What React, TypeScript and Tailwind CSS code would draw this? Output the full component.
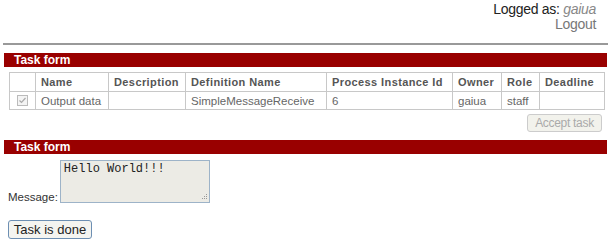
import React from "react";

const th = "border border-[#c8c8c8] px-[5px] text-left font-bold text-[11px] text-[#555] h-[19px] p-0 whitespace-nowrap overflow-hidden tracking-[0.4px] leading-[17px]";
const td = "border border-[#c8c8c8] px-[5px] text-[11.5px] text-[#666] h-[18px] p-0 whitespace-nowrap overflow-hidden leading-[16px]";

export default function App() {
  return (
    <div className="w-[611px] h-[241px] bg-white relative overflow-hidden" style={{ fontFamily: "'Liberation Sans', Arial, sans-serif" }}>
      <div className="flex flex-col items-end pr-[15px] pt-[2px] text-[14px] leading-[15px] tracking-[-0.3px]">
        <div className="text-[#222]">Logged as: <span className="italic text-[#888]">gaiua</span></div>
        <div className="text-[#777]">Logout</div>
      </div>
      <div className="mx-[3px] mt-[11px] h-[2px] bg-[#999]" />
      <div className="mx-[4px] mt-[8px] h-[14px] bg-[#990000] text-white font-bold text-[12px] leading-[14px] pl-[10px]">Task form</div>
      <div className="pl-[9px] pr-[7px] mt-[5px]">
        <table className="w-[595px] border-collapse table-fixed">
          <colgroup>
            <col className="w-[26px]" />
            <col className="w-[73px]" />
            <col className="w-[77px]" />
            <col className="w-[141px]" />
            <col className="w-[126px]" />
            <col className="w-[49px]" />
            <col className="w-[38px]" />
            <col className="w-[65px]" />
          </colgroup>
          <thead>
            <tr>
              <th className={th}></th>
              <th className={th}>Name</th>
              <th className={th}>Description</th>
              <th className={th}>Definition Name</th>
              <th className={th}>Process Instance Id</th>
              <th className={th}>Owner</th>
              <th className={th}>Role</th>
              <th className={th}>Deadline</th>
            </tr>
          </thead>
          <tbody>
            <tr>
              <td className={td}>
                <div className="w-[11px] h-[11px] border border-[#bbb] bg-[#f4f4f4] flex items-center justify-center mx-auto">
                  <svg width="9" height="9" viewBox="0 0 9 9"><path d="M1.5 4.5 L3.5 6.5 L7.5 2" stroke="#aaa" strokeWidth="1.2" fill="none" /></svg>
                </div>
              </td>
              <td className={td}>Output data</td>
              <td className={td}></td>
              <td className={td}>SimpleMessageReceive</td>
              <td className={td}>6</td>
              <td className={td}>gaiua</td>
              <td className={td}>staff</td>
              <td className={td}></td>
            </tr>
          </tbody>
        </table>
      </div>
      <div className="flex justify-end pr-[9px] mt-[4px]">
        <button className="w-[75px] h-[18px] border border-[#ccc] rounded-[3px] bg-[#f2f2ec] text-[#aaa] text-[12px] leading-[16px] tracking-[-0.3px]">Accept task</button>
      </div>
      <div className="mx-[4px] mt-[8px] h-[14px] bg-[#990000] text-white font-bold text-[12px] leading-[14px] pl-[10px]">Task form</div>
      <div className="flex items-end pl-[8px] mt-[6px]">
        <span className="text-[11.5px] text-[#333] mr-[2px] leading-[12px]">Message:</span>
        <div className="w-[150px] h-[43px] border border-[#9db3c8] bg-[#ecebe5] relative">
          <div className="text-[12px] text-[#222] pl-[3px] pt-[1px] leading-[14px]" style={{ fontFamily: "'Liberation Mono', 'Courier New', monospace" }}>Hello World!!!</div>
          <svg className="absolute right-[1px] bottom-[1px]" width="8" height="8" viewBox="0 0 8 8">
            <rect x="6" y="1" width="1" height="1" fill="#999" />
            <rect x="4" y="3" width="1" height="1" fill="#999" />
            <rect x="6" y="3" width="1" height="1" fill="#999" />
            <rect x="2" y="5" width="1" height="1" fill="#999" />
            <rect x="4" y="5" width="1" height="1" fill="#999" />
            <rect x="6" y="5" width="1" height="1" fill="#999" />
          </svg>
        </div>
      </div>
      <div className="pl-[8px] mt-[17px] flex">
        <button className="w-[84px] h-[19px] border border-[#6d8fb3] rounded-[3px] bg-[#f4f4f0] text-[#222] text-[13px] leading-[17px]">Task is done</button>
      </div>
    </div>
  );
}
